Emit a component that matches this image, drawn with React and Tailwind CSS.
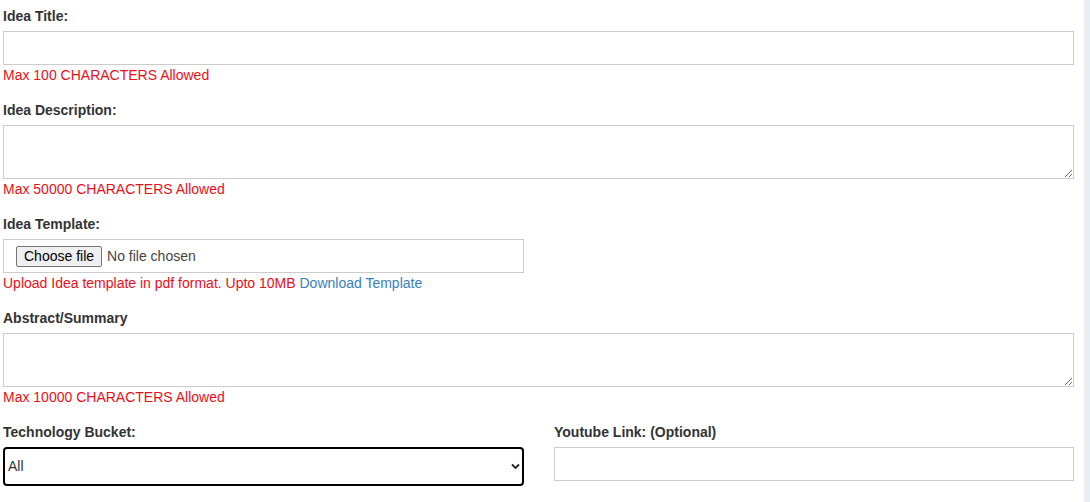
import React from 'react'

const Label = ({ children }) => (
    <label className="block text-[14px] leading-[18px] font-bold text-[#333] mb-[6px]">{children}</label>
)

const Help = ({ children }) => (
    <p className="text-[14px] leading-[18px] text-[#e8101a] mt-[1px]">{children}</p>
)

const App = () => {
    return (
        <div className="flex w-[1090px] h-[502px] bg-white overflow-hidden" style={{ fontFamily: '"Liberation Sans", Arial, sans-serif' }}>
            <div className="w-[1084px] pl-[3px] pr-[10px] pt-[7px]">
                {/* Idea Title */}
                <div className="mb-[17px]">
                    <Label>Idea Title:</Label>
                    <input type="text" className="block w-full h-[34px] border border-[#ccc] bg-white outline-none" />
                    <Help>Max 100 CHARACTERS Allowed</Help>
                </div>

                {/* Idea Description */}
                <div className="mb-[17px]">
                    <Label>Idea Description:</Label>
                    <textarea className="block w-full h-[54px] border border-[#ccc] bg-white outline-none resize-y" />
                    <Help>Max 50000 CHARACTERS Allowed</Help>
                </div>

                {/* Idea Template */}
                <div className="mb-[17px]">
                    <Label>Idea Template:</Label>
                    <div className="flex items-center w-[521px] h-[34px] border border-[#ccc] pl-[12px]">
                        <button className="h-[21px] px-[7px] border border-[#767676] rounded-[2px] bg-[#efefef] text-[14px] leading-[19px] text-black">Choose file</button>
                        <span className="ml-[5px] text-[14px] text-[#444]">No file chosen</span>
                    </div>
                    <p className="text-[14px] leading-[18px] text-[#e8101a] mt-[1px]">
                        Upload Idea template in pdf format. Upto 10MB{' '}
                        <a className="text-[#3a80b8]" href="#">Download Template</a>
                    </p>
                </div>

                {/* Abstract */}
                <div className="mb-[17px]">
                    <Label>Abstract/Summary</Label>
                    <textarea className="block w-full h-[54px] border border-[#ccc] bg-white outline-none resize-y" />
                    <Help>Max 10000 CHARACTERS Allowed</Help>
                </div>

                {/* Bucket + Youtube */}
                <div className="grid grid-cols-[521px_1fr] gap-x-[30px]">
                    <div>
                        <Label>Technology Bucket:</Label>
                        <div className="relative">
                            <select className="block w-full h-[39px] border-2 border-black rounded-[4px] bg-white text-[14px] text-[#333] pl-[3px] appearance-none outline-none">
                                <option>All</option>
                            </select>
                            <svg className="absolute right-[4px] top-[16px] w-[9px] h-[7px] pointer-events-none" viewBox="0 0 9 7" fill="none" stroke="#222" strokeWidth="1.8">
                                <path d="M1 1.5l3.5 3.5 3.5-3.5" />
                            </svg>
                        </div>
                    </div>
                    <div>
                        <Label>Youtube Link: (Optional)</Label>
                        <input type="text" className="block w-full h-[34px] border border-[#ccc] bg-white outline-none" />
                    </div>
                </div>
            </div>
            <div className="w-[6px] bg-[#e9eef4]" />
        </div>
    )
}

export default App
